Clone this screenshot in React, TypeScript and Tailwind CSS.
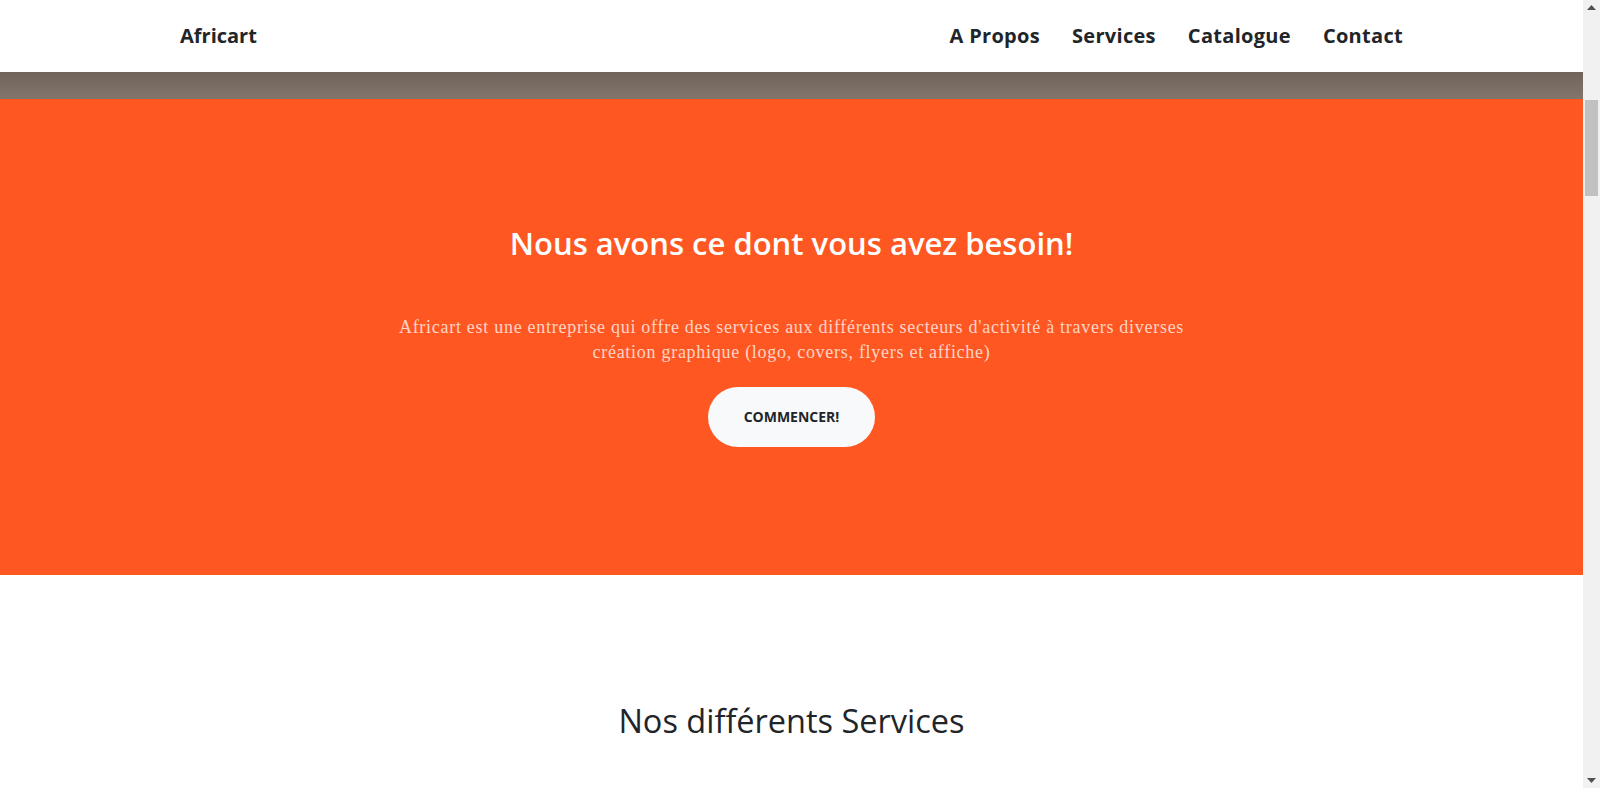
import React from 'react';

const navLinks = ['A Propos', 'Services', 'Catalogue', 'Contact'];

const services = [
    { title: 'Logos', text: 'Une identité visuelle forte et unique pour votre marque.' },
    { title: 'Covers', text: 'Des pochettes qui donnent envie de découvrir votre projet.' },
    { title: 'Flyers', text: 'Des supports clairs pour annoncer vos événements.' },
    { title: 'Affiches', text: 'Des visuels grand format qui attirent le regard.' },
];

const App: React.FC = () => {
    return (
        <div className="min-h-screen bg-white text-[#212529]" style={{ fontFamily: '"Open Sans", "Noto Sans", sans-serif' }}>
            <div className="mr-[17px]">
                {/* Navbar */}
                <nav className="h-[72px] bg-white">
                    <div className="max-w-[1223px] mx-auto h-full flex items-center justify-between">
                        <a href="#" className="text-[20px] font-bold text-[#212529]">
                            Africart
                        </a>
                        <ul className="flex items-center gap-[32px]">
                            {navLinks.map((link) => (
                                <li key={link}>
                                    <a href="#" className="text-[20px] font-bold tracking-[0.3px] text-[#212529]">
                                        {link}
                                    </a>
                                </li>
                            ))}
                        </ul>
                    </div>
                </nav>

                {/* Masthead strip */}
                <div className="h-[27px] bg-gradient-to-b from-[#6f635b] to-[#82766c]"></div>

                {/* Hero */}
                <section className="bg-[#ff5722] pt-[125px] pb-[128px]">
                    <div className="max-w-[791px] mx-auto text-center flex flex-col items-center">
                        <h1 className="text-[31px] leading-[1.24] font-semibold text-white">
                            Nous avons ce dont vous avez besoin!
                        </h1>
                        <p
                            className="mt-[53px] text-[18px] leading-[24.5px] tracking-[0.72px] text-white/75"
                            style={{ fontFamily: '"Liberation Serif", "DejaVu Serif", serif' }}
                        >
                            Africart est une entreprise qui offre des services aux différents secteurs d'activité à travers diverses création graphique (logo, covers, flyers et affiche)
                        </p>
                        <a
                            href="#"
                            className="mt-[23px] px-9 py-5 rounded-full bg-[#f8f9fa] text-[14px] leading-[19.6px] font-bold uppercase text-[#212529]"
                        >
                            Commencer!
                        </a>
                    </div>
                </section>

                {/* Services */}
                <section className="pt-[126px] pb-32">
                    <div className="max-w-[1223px] mx-auto">
                        <h2 className="text-[32.5px] leading-[1.2] text-center text-[#212529]">Nos différents Services</h2>
                        <div className="grid grid-cols-4 gap-6 mt-28">
                            {services.map((s) => (
                                <div key={s.title} className="text-center">
                                    <div className="w-14 h-14 mx-auto rounded-full bg-[#ff5722]"></div>
                                    <h3 className="mt-4 text-xl font-bold">{s.title}</h3>
                                    <p className="mt-2 text-[#6c757d]" style={{ fontFamily: '"Liberation Serif", serif' }}>
                                        {s.text}
                                    </p>
                                </div>
                            ))}
                        </div>
                    </div>
                </section>
            </div>

            {/* Scrollbar */}
            <div className="fixed top-0 right-0 w-[17px] h-screen bg-[#f1f1f1] flex flex-col items-center justify-between py-[5px]">
                <svg width="9" height="5" viewBox="0 0 9 5">
                    <path d="M0 5 L4.5 0 L9 5 Z" fill="#505050" />
                </svg>
                <div className="absolute top-[100px] left-[2px] w-[13px] h-[96px] bg-[#c1c1c1]"></div>
                <svg width="9" height="5" viewBox="0 0 9 5">
                    <path d="M0 0 L4.5 5 L9 0 Z" fill="#505050" />
                </svg>
            </div>
        </div>
    );
};

export default App;
